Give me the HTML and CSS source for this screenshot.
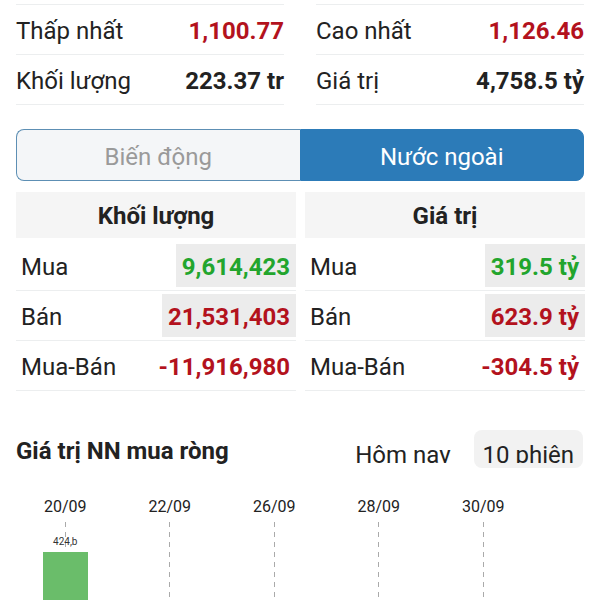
FILE: index.html
```html
<!DOCTYPE html>
<html lang="vi">
<head>
    <meta charset="UTF-8">
    <meta name="viewport" content="width=device-width, initial-scale=1.0">
    <title>Thị trường</title>
    <link rel="stylesheet" href="styles.css">
</head>
<body>
    <!-- Summary -->
    <section class="summary">
        <div class="summary-col">
            <div class="summary-row"><span>Thấp nhất</span><span class="value down">1,100.77</span></div>
            <div class="summary-row"><span>Khối lượng</span><span class="value">223.37 tr</span></div>
        </div>
        <div class="summary-col">
            <div class="summary-row"><span>Cao nhất</span><span class="value down">1,126.46</span></div>
            <div class="summary-row"><span>Giá trị</span><span class="value">4,758.5 tỷ</span></div>
        </div>
    </section>

    <!-- Tabs -->
    <div class="tabs">
        <button class="tab">Biến động</button>
        <button class="tab active">Nước ngoài</button>
    </div>

    <!-- Foreign trading -->
    <section class="foreign">
        <div class="panel">
            <div class="panel-head">Khối lượng</div>
            <div class="panel-row"><span>Mua</span><span class="cell shaded up">9,614,423</span></div>
            <div class="panel-row"><span>Bán</span><span class="cell shaded down">21,531,403</span></div>
            <div class="panel-row"><span>Mua-Bán</span><span class="cell down">-11,916,980</span></div>
        </div>
        <div class="panel">
            <div class="panel-head">Giá trị</div>
            <div class="panel-row"><span>Mua</span><span class="cell shaded up">319.5 tỷ</span></div>
            <div class="panel-row"><span>Bán</span><span class="cell shaded down">623.9 tỷ</span></div>
            <div class="panel-row"><span>Mua-Bán</span><span class="cell down">-304.5 tỷ</span></div>
        </div>
    </section>

    <!-- Net buy chart -->
    <div class="chart-head">
        <h2 class="chart-title">Giá trị NN mua ròng</h2>
        <div class="range">
            <span class="range-btn"><span class="range-label">Hôm nay</span></span>
            <span class="range-btn selected"><span class="range-label">10 phiên</span></span>
        </div>
    </div>

    <div class="chart">
        <div class="chart-col">
            <span class="chart-date">20/09</span>
            <span class="chart-grid"></span>
            <span class="bar-label">424,b</span>
            <span class="bar"></span>
        </div>
        <div class="chart-col">
            <span class="chart-date">22/09</span>
            <span class="chart-grid"></span>
        </div>
        <div class="chart-col">
            <span class="chart-date">26/09</span>
            <span class="chart-grid"></span>
        </div>
        <div class="chart-col">
            <span class="chart-date">28/09</span>
            <span class="chart-grid"></span>
        </div>
        <div class="chart-col">
            <span class="chart-date">30/09</span>
            <span class="chart-grid"></span>
        </div>
    </div>
</body>
</html>
```

FILE: styles.css
```css
/* Global */
* {
    margin: 0;
    padding: 0;
    box-sizing: border-box;
}

body {
    padding-top: 4px;
    font-family: Roboto, 'Noto Sans', sans-serif;
    color: #222;
    background-color: #fff;
    overflow: hidden;
}

.up {
    color: #22a52d;
}

.down {
    color: #b3121d;
}

/* Summary */
.summary {
    display: grid;
    grid-template-columns: 1fr 1fr;
    column-gap: 32px;
    padding: 0 16px;
}

.summary-col {
    border-top: 1px solid #eceeef;
}

.summary-row {
    height: 50px;
    padding-top: 3px;
    border-bottom: 1px solid #eceeef;
    display: flex;
    justify-content: space-between;
    align-items: center;
    font-size: 24px;
}

.value {
    font-weight: 700;
}

/* Tabs */
.tabs {
    display: flex;
    height: 52px;
    margin: 24px 16px 0;
}

.tab {
    flex: 1;
    padding-top: 3px;
    font-family: inherit;
    font-size: 24px;
    color: #9a9a9a;
    background-color: #f4f6f8;
    border: 1.5px solid #5d8fb4;
    border-right: none;
    border-radius: 8px 0 0 8px;
}

.tab.active {
    color: #fff;
    background-color: #2c7bb8;
    border: 1px solid #2c7bb8;
    border-radius: 0 8px 8px 0;
}

/* Foreign panels */
.foreign {
    display: grid;
    grid-template-columns: 1fr 1fr;
    column-gap: 9px;
    margin: 11px 15px 0 16px;
}

.panel-head {
    height: 46px;
    margin-bottom: 3px;
    padding-top: 2px;
    background-color: #f5f5f5;
    display: flex;
    justify-content: center;
    align-items: center;
    font-size: 24px;
    font-weight: 700;
}

.panel-row {
    height: 50px;
    padding-left: 5px;
    border-bottom: 1px solid #eceeef;
    display: flex;
    justify-content: space-between;
    align-items: center;
    font-size: 24px;
}

.panel-row > span:first-child {
    padding-top: 3px;
}

.cell {
    height: 43px;
    padding: 3px 6px 0;
    display: flex;
    align-items: center;
    font-weight: 700;
}

.cell.shaded {
    background-color: #ececec;
}

/* Chart header */
.chart-head {
    display: flex;
    align-items: center;
    height: 38px;
    margin: 39px 17px 0 16px;
}

.chart-title {
    flex: 1;
    font-size: 24px;
    font-weight: 700;
    padding-top: 3px;
}

.range {
    display: flex;
    gap: 14px;
}

.range-btn {
    height: 38px;
    padding: 0 9px;
    border-radius: 8px;
}

.range-btn.selected {
    background-color: #f2f2f2;
}

.range-label {
    display: block;
    height: 33px;
    overflow: hidden;
    font-size: 24px;
    line-height: 50px;
    color: #222;
}

/* Chart */
.chart {
    display: flex;
    height: 140px;
    margin-top: 29px;
    padding-left: 13px;
}

.chart-col {
    position: relative;
    width: 104.5px;
    display: flex;
    flex-direction: column;
    align-items: center;
}

.chart-date {
    font-size: 16px;
    line-height: 20px;
    color: #222;
}

.chart-grid {
    flex: 1;
    width: 1px;
    margin-top: 5px;
    background: repeating-linear-gradient(to bottom, #aaa 0 5px, transparent 5px 10px);
}

.bar-label {
    position: absolute;
    top: 40px;
    left: 0;
    width: 100%;
    text-align: center;
    font-size: 10px;
    line-height: 10px;
    color: #333;
}

.bar {
    position: absolute;
    top: 55px;
    left: 30px;
    width: 45px;
    height: 90px;
    background-color: #6abd6a;
}
```
